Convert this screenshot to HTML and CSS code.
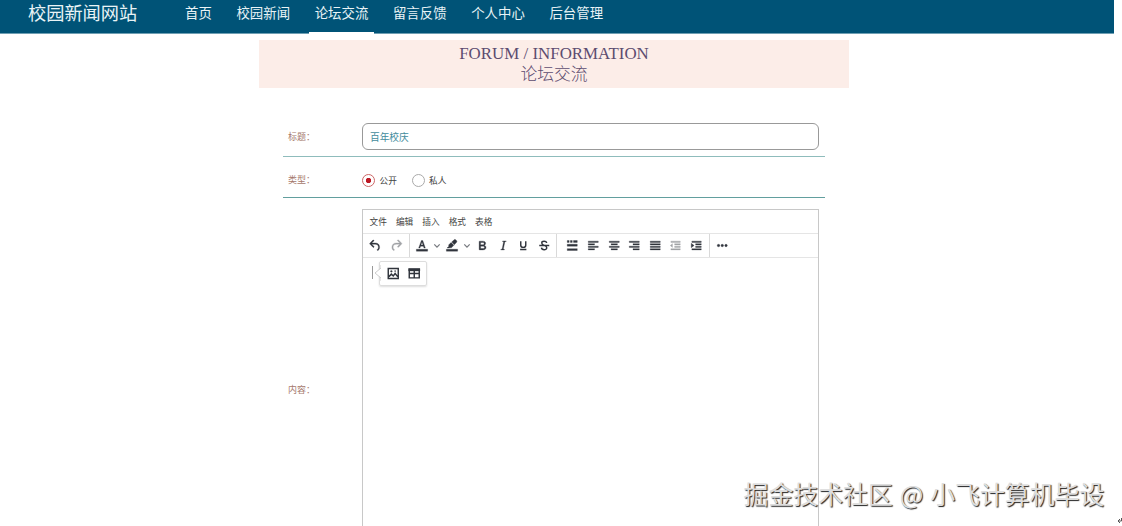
FILE: index.html
```html
<!DOCTYPE html>
<html lang="zh-CN">
<head>
<meta charset="utf-8">
<title>校园新闻网站</title>
<link rel="stylesheet" href="styles.css">
</head>
<body>
<header class="navbar">
  <div class="brand">校园新闻网站</div>
  <nav class="menu">
    <a>首页</a><a>校园新闻</a><a class="active">论坛交流</a><a>留言反馈</a><a>个人中心</a><a>后台管理</a>
  </nav>
</header>
<section class="banner">
  <div class="banner-en">FORUM / INFORMATION</div>
  <div class="banner-cn">论坛交流</div>
</section>
<main class="form">
  <div class="row row-title">
    <label class="label">标题：</label>
    <div class="input">百年校庆</div>
  </div>
  <div class="row row-type">
    <label class="label">类型：</label>
    <div class="radios">
      <span class="radio checked"></span><span class="radio-text">公开</span>
      <span class="radio"></span><span class="radio-text">私人</span>
    </div>
  </div>
  <div class="row row-content">
    <label class="label">内容：</label>
    <div class="editor">
      <div class="editor-menu"><span>文件</span><span>编辑</span><span>插入</span><span>格式</span><span>表格</span></div>
      <div class="toolbar">
        <div class="group history">
          <svg class="icon" viewBox="0 0 24 24"><path d="M6.4 8H12c3.7 0 6.2 2 6.8 5.1.6 2.7-.4 5.6-2.3 6.8a1 1 0 01-1-1.8c1.1-.6 1.8-2.7 1.4-4.6-.5-2.1-2.1-3.5-4.9-3.5H6.4l3.3 3.3a1 1 0 11-1.4 1.4l-5-5a1 1 0 010-1.4l5-5a1 1 0 011.4 1.4L6.4 8z"/></svg>
          <svg class="icon disabled" viewBox="0 0 24 24"><path d="M17.6 10H12c-2.8 0-4.4 1.4-4.9 3.5-.4 2 .3 4 1.4 4.6a1 1 0 11-1 1.8c-2-1.2-2.9-4.1-2.3-6.8.6-3 3-5.1 6.8-5.1h5.6l-3.3-3.3a1 1 0 111.4-1.4l5 5a1 1 0 010 1.4l-5 5a1 1 0 01-1.4-1.4l3.3-3.3z"/></svg>
        </div>
        <div class="group styles">
          <svg class="icon split" viewBox="0 0 24 24"><path d="M3 18h18v3H3zM8.7 16h-2L11 4h2.2l4.1 12h-2.1l-1-3H9.7zm1.6-4.7h3.3L12 6.5z"/></svg>
          <svg class="icon chevron" viewBox="0 0 24 24"><path class="line" d="M7 10l5 5 5-5"/></svg>
          <svg class="icon split" viewBox="0 0 24 24"><path d="M3 18h18v3H3zM7 16H4l3-3-.5-1.800 4-4 4.500 4.500-4 4-2-.2zM11.500 6.500L15 3c1-1 2.200-1 3.200 0l.9.9c1 1 1 2.200 0 3.200l-3.400 3.600z"/></svg>
          <svg class="icon chevron" viewBox="0 0 24 24"><path class="line" d="M7 10l5 5 5-5"/></svg>
          <svg class="icon" viewBox="0 0 24 24"><path d="M7.800 19c-.3 0-.5 0-.6-.2l-.2-.5V5.700c0-.2 0-.4.2-.5l.6-.2h5c1.500 0 2.700.3 3.500 1 .7.6 1.100 1.400 1.100 2.500a3 3 0 01-.6 1.900c-.4.6-1 1-1.600 1.200.4.1.9.3 1.300.6s.8.7 1 1.200c.4.4.5 1 .5 1.600 0 1.300-.4 2.300-1.300 3-.8.7-2.100 1-3.800 1H7.800zm5-8.300c.6 0 1.200-.1 1.600-.5.4-.3.6-.7.6-1.300 0-1.100-.8-1.700-2.300-1.700H9.300v3.500h3.400zm.5 6c.7 0 1.300-.1 1.700-.4.4-.4.6-.9.6-1.500s-.2-1-.7-1.400c-.4-.3-1-.4-2-.4H9.400v3.800h4z"/></svg>
          <svg class="icon" viewBox="0 0 24 24"><path d="M16.7 4.700l-.1.9h-.3c-.6 0-1 0-1.400.3-.3.3-.4.6-.5 1.100l-2.100 9.800v.6c0 .5.4.8 1.400.8h.2l-.2.8H8l.2-.8h.2c1.100 0 1.800-.5 2-1.500l2-9.800.1-.5c0-.6-.4-.8-1.400-.8h-.3l.2-.9h5.700z"/></svg>
          <svg class="icon" viewBox="0 0 24 24"><path class="line" d="M8 5v6.500c0 4.700 8 4.700 8 0V5M7 18.500h10"/></svg>
          <svg class="icon" viewBox="0 0 24 24"><path class="line" d="M16 8c-.7-4-8-3.700-8-.2C8 13 16 10.500 16 15.500c0 4.500-8 4.300-8.500 0M4 12h16"/></svg>
        </div>
        <div class="group align">
          <svg class="icon first" viewBox="0 0 24 24"><path d="M4 4h3v3H4zm5 0h3v3H9zm5 0h6v3h-6zM4 10h16v3H4zm0 7h16v3H4z"/></svg>
          <svg class="icon" viewBox="0 0 24 24"><path d="M4 5h16v2H4zm0 4h10v2H4zm0 4h16v2H4zm0 4h10v2H4z"/></svg>
          <svg class="icon" viewBox="0 0 24 24"><path d="M4 5h16v2H4zm3 4h10v2H7zm-3 4h16v2H4zm3 4h10v2H7z"/></svg>
          <svg class="icon" viewBox="0 0 24 24"><path d="M4 5h16v2H4zm6 4h10v2H10zm-6 4h16v2H4zm6 4h10v2H10z"/></svg>
          <svg class="icon" viewBox="0 0 24 24"><path d="M4 5h16v2H4zm0 4h16v2H4zm0 4h16v2H4zm0 4h16v2H4z"/></svg>
          <svg class="icon disabled" viewBox="0 0 24 24"><path d="M5 5h15v2H5zm6 4h9v2h-9zm0 4h9v2h-9zm-6 4h15v2H5zM7.500 9v6L4 12z"/></svg>
          <svg class="icon" viewBox="0 0 24 24"><path d="M5 5h15v2H5zm6 4h9v2h-9zm0 4h9v2h-9zm-6 4h15v2H5zM4 8.500v7L8.500 12z"/></svg>
        </div>
        <div class="group more">
          <svg class="icon" viewBox="0 0 24 24"><circle cx="6" cy="12" r="2"/><circle cx="12" cy="12" r="2"/><circle cx="18" cy="12" r="2"/></svg>
        </div>
      </div>
      <div class="editor-body">
        <span class="caret"></span>
        <div class="quickbar">
          <svg class="icon" viewBox="0 0 24 24"><path class="line" d="M4 4h16v16H4zM5 17l4-4 3 3 3-4 4 5"/><circle cx="9" cy="8.500" r="1.500"/><circle cx="15" cy="8" r="1"/></svg>
          <svg class="icon" viewBox="0 0 24 24"><path class="line" d="M4 5h16v14H4zM4 12h16M12 6v13"/><path d="M3 4h18v4H3z"/></svg>
          <svg class="arrow" viewBox="0 0 8 16"><path d="M8 0v3L2 8l6 5v3"/></svg>
        </div>
      </div>
    </div>
  </div>
</main>
<div class="watermark">掘金技术社区 @ 小飞计算机毕设</div>
<svg class="return-mark" viewBox="0 0 5 8"><path d="M4.500 1v3H1M3 2L1 4l2 2"/></svg>
</body>
</html>
```
FILE: styles.css
```css
* { box-sizing: border-box; }
body {
  margin: 0;
  width: 1122px;
  height: 526px;
  overflow: hidden;
  position: relative;
  background: #fff;
  font-family: "Noto Sans CJK SC", sans-serif;
}
.navbar {
  width: 1114px;
  height: 34px;
  display: flex;
  padding-left: 28px;
  background: #005377;
  border-bottom: 1px solid #6f9fb3;
  color: #e9f3f6;
}
.brand {
  width: 151px;
  font-size: 18.2px;
  line-height: 24px;
  white-space: nowrap;
}
.menu { display: flex; gap: 12.7px; height: 34px; }
.menu a {
  padding: 0 6px;
  font-size: 13.4px;
  line-height: 24px;
  white-space: nowrap;
}
.menu .active { border-bottom: 2px solid #fff; }
.banner {
  width: 590px;
  height: 48px;
  margin: 6px 0 0 259px;
  padding-top: 4px;
  background: #fcede8;
  color: #5c4c70;
  text-align: center;
}
.banner-en {
  font-family: "Liberation Serif", serif;
  font-size: 16.9px;
  line-height: 20px;
}
.banner-cn {
  font-size: 16.8px;
  line-height: 18px;
  font-weight: 300;
}
.form { width: 542px; margin: 31px 0 0 283px; }
.row { display: flex; align-items: center; }
.label {
  width: 79px;
  padding-left: 5px;
  font-size: 9px;
  line-height: 12px;
  color: #a5786c;
}
.row-title {
  height: 38px;
  border-bottom: 1px solid #8fbcbc;
}
.row-title .label { margin-bottom: 2px; }
.row-title .input { margin-bottom: 2px; }
.input {
  width: 457px;
  height: 27px;
  padding-left: 7px;
  border: 1px solid #999;
  border-radius: 6px;
  font-size: 9.7px;
  line-height: 26px;
  color: #438c9c;
}
.row-type { height: 41px; border-bottom: 1px solid #629f9e; }
.row-type .label { margin-top: 5px; }
.radios { display: flex; align-items: center; margin-top: 7px; }
.radio {
  width: 13px;
  height: 13px;
  border: 1px solid #aaa;
  border-radius: 50%;
}
.checked {
  border-color: #c66;
  background: radial-gradient(circle, #bd1824 0 2.4px, #fff 3px);
}
.radio-text {
  width: 36.5px;
  padding-left: 4.5px;
  font-size: 8.7px;
  line-height: 13px;
  color: #444;
}
.row-content { height: 317px; margin-top: 11px; }
.row-content .label { align-self: flex-start; margin-top: 175px; }
.editor {
  width: 457px;
  height: 317px;
  border: 1px solid #c8c8c8;
  border-bottom: 0;
}
.editor-menu {
  display: flex;
  gap: 9px;
  height: 24px;
  padding-left: 6.5px;
  border-bottom: 1px solid #e5e5e5;
  font-size: 8.7px;
  line-height: 24px;
  color: #444;
}
.toolbar { display: flex; height: 24px; border-bottom: 1px solid #e5e5e5; }
.group {
  display: flex;
  align-items: center;
  border-right: 1px solid #d9d9d9;
}
.icon {
  flex: none;
  width: 20.5px;
  height: 15px;
  fill: #30343c;
  stroke: #30343c;
  stroke-width: .5;
}
.line { fill: none; stroke: #30343c; stroke-width: 2.3; }
.disabled { opacity: .45; }
.history { width: 47px; padding-left: 2px; }
.styles { width: 147px; padding-left: 2px; }
.split { width: 20px; }
.chevron { width: 10px; height: 15px; overflow: visible; opacity: .65; }
.chevron .line { transform: translate(-3.6px, -3.6px) scale(1.3); }
.align { width: 153px; padding-left: 4.5px; }
.align .first { margin-right: 1px; }
.more { border: 0; padding-left: 2px; }
.editor-body { display: flex; padding: 3px 0 0 9px; }
.caret { width: 1px; height: 13px; margin: 5px 6px 0 0; background: #999; }
.quickbar {
  position: relative;
  display: flex;
  align-items: center;
  width: 48px;
  height: 25px;
  padding-left: 3px;
  border: 1px solid #ddd;
  border-radius: 2px;
  box-shadow: 0 1px 2px #0002;
}
.arrow {
  position: absolute;
  left: -7px;
  top: 3px;
  width: 8px;
  height: 16px;
  fill: #fff;
  stroke: #ccc;
}
.watermark {
  position: absolute;
  left: 743.5px;
  top: 475px;
  font-size: 24.9px;
  line-height: 37px;
  word-spacing: 1.3px;
  white-space: nowrap;
  color: #ddd;
  text-shadow: 1px 1px 1px #222;
}
.return-mark {
  position: absolute;
  left: 1117px;
  top: 517px;
  width: 5px;
  height: 8px;
  fill: none;
  stroke: #555;
}
```
